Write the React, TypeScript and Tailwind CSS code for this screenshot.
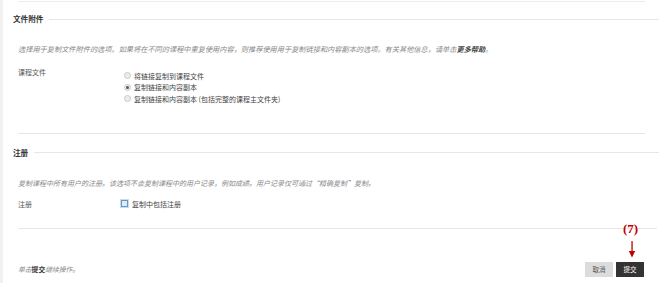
import React from "react";

const font = { fontFamily: '"Noto Sans CJK SC", "Noto Sans", sans-serif' };

function Radio({ checked = false }: { checked?: boolean }) {
  return (
    <span className="flex h-[7px] w-[7px] shrink-0 items-center justify-center rounded-full border border-[#c9c9c9] bg-[#ececec]">
      {checked && <span className="h-[3px] w-[3px] rounded-full bg-[#555]" />}
    </span>
  );
}

function SectionHeading({ title }: { title: string }) {
  return (
    <div className="flex h-[12px] items-center">
      <span className="ml-[10px] text-[7.6px] font-bold leading-[12px] text-[#333]">{title}</span>
      <span className="ml-[6px] h-px flex-1 bg-[#e6e6e6]" />
    </div>
  );
}

export default function App() {
  const options = [
    { label: "将链接复制到课程文件", checked: false },
    { label: "复制链接和内容副本", checked: true },
    { label: "复制链接和内容副本 (包括完整的课程主文件夹)", checked: false },
  ];

  return (
    <div className="relative flex h-[288px] w-[659px] overflow-hidden bg-white" style={font}>
      <div className="h-[283px] w-[3px] shrink-0 bg-[#f1f1f1]" />

      <div className="flex flex-1 flex-col">
        {/* top rule */}
        <div className="ml-[15px] mr-[14px] mt-px h-px bg-[#ececec]" />

        {/* 文件附件 */}
        <div className="mt-[11px]">
          <SectionHeading title="文件附件" />
        </div>
        <p className="ml-[15px] mt-[18px] h-[12px] text-[7.2px] italic leading-[12px] text-[#888]">
          选择用于复制文件附件的选项。如果将在不同的课程中重复使用内容，则推荐使用用于复制链接和内容副本的选项。有关其他信息，请单击
          <span className="font-bold text-[#444]">更多帮助</span>。
        </p>

        <div className="ml-[15px] mt-[12px] flex">
          <span className="w-[106px] text-[7px] leading-[10px] text-[#555]">课程文件</span>
          <div className="flex flex-col pt-[3px]">
            {options.map((o) => (
              <div key={o.label} className="flex h-[11.5px] items-center gap-[3px]">
                <Radio checked={o.checked} />
                <span className="text-[7px] leading-[10px] text-[#444]">{o.label}</span>
              </div>
            ))}
          </div>
        </div>

        <div className="ml-[15px] mr-[14px] mt-[28px] h-px bg-[#e6e6e6]" />

        {/* 注册 */}
        <div className="mt-[13px]">
          <SectionHeading title="注册" />
        </div>
        <p className="ml-[15px] mt-[18px] h-[12px] text-[7px] italic leading-[12px] text-[#888]">
          复制课程中所有用户的注册。该选项不会复制课程中的用户记录，例如成绩。用户记录仅可通过“精确复制”复制。
        </p>

        <div className="ml-[15px] mt-[9px] flex h-[12px] items-center">
          <span className="w-[103px] text-[7px] leading-[10px] text-[#555]">注册</span>
          <span className="h-[7px] w-[7px] shrink-0 border border-[#5b9bd5] bg-[#e9e9e9] shadow-[0_0_0_1px_rgba(91,155,213,0.35)]" />
          <span className="ml-[4px] text-[7px] leading-[10px] text-[#444]">复制中包括注册</span>
        </div>

        <div className="ml-[15px] mr-[2px] mt-[18px] h-px bg-[#e6e6e6]" />

        {/* footer */}
        <div className="ml-[15px] mr-[15px] mt-[33px] flex items-center justify-between">
          <span className="-mt-px text-[6.8px] italic leading-[10px] text-[#888]">
            单击<span className="font-bold not-italic text-[#333]">提交</span>继续操作。
          </span>
          <div className="flex gap-[3px]">
            <button className="h-[15px] w-[28px] bg-[#dcdcdc] text-[6.5px] leading-[15px] text-[#555]">取消</button>
            <button className="h-[15px] w-[28px] bg-[#333] text-[6.5px] leading-[15px] text-white">提交</button>
          </div>
        </div>
      </div>

      {/* annotation */}
      <span
        className="absolute left-[623px] top-[221px] text-[13px] font-bold leading-[16px] text-[#c00000]"
        style={{ fontFamily: '"Liberation Serif", serif' }}
      >
        (7)
      </span>
      <svg className="absolute left-[627px] top-[241px]" width="10" height="18" viewBox="0 0 10 18">
        <line x1="5.5" y1="1" x2="5.5" y2="12" stroke="#999" strokeWidth="1" opacity="0.5" />
        <line x1="5" y1="0" x2="5" y2="11" stroke="#c00000" strokeWidth="1.2" />
        <path d="M1.8 10 L8.2 10 L5 16.5 Z" fill="#c00000" />
      </svg>
    </div>
  );
}
